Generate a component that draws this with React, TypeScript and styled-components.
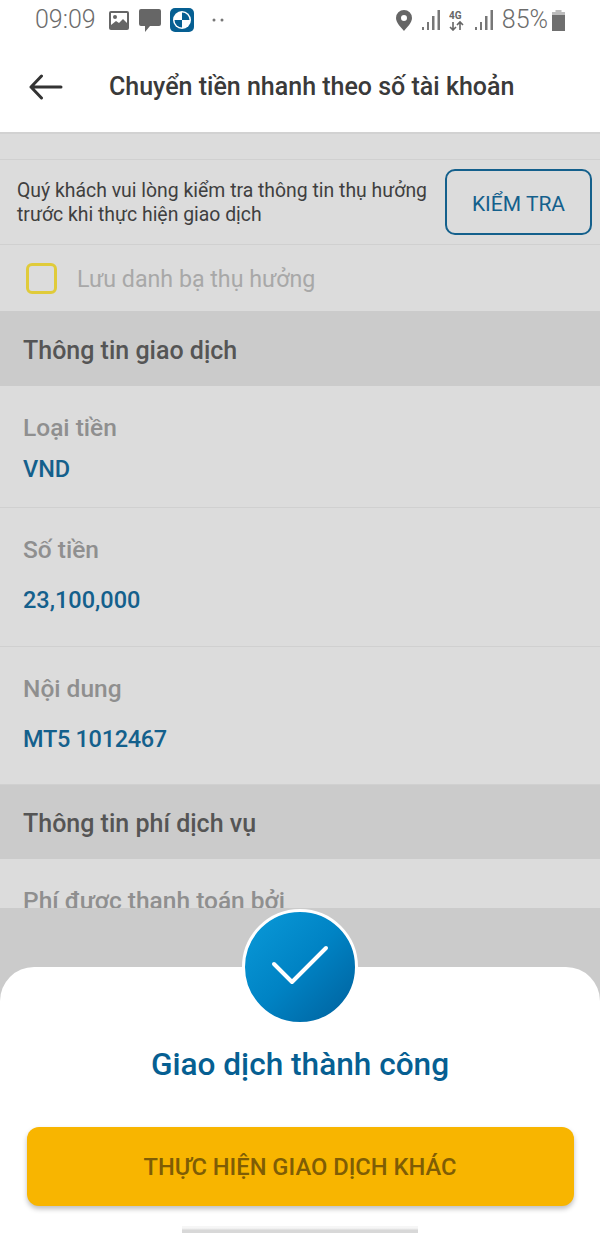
import React from 'react';
import styled, { createGlobalStyle } from 'styled-components';

const GlobalStyle = createGlobalStyle`
  html, body {
    margin: 0;
    padding: 0;
    background: #cbcbcb;
  }
  * {
    box-sizing: border-box;
  }
`

const Page = styled.div`
  position: relative;
  width: 600px;
  height: 1233px;
  overflow: hidden;
  display: flex;
  flex-direction: column;
  background: #cbcbcb;
  font-family: Roboto, "Noto Sans", sans-serif;
`

const StatusBar = styled.div`
  height: 44px;
  flex: none;
  background: #fff;
  display: flex;
  align-items: center;
  justify-content: space-between;
  padding: 0 35px 4px 35px;
  color: #6f6f6f;
`

const StatusGroup = styled.div`
  display: flex;
  align-items: center;
`

const StatusText = styled.span<{ $left?: number }>`
  font-size: 25px;
  font-weight: 300;
  line-height: 30px;
  color: #6c6c6c;
  margin-left: ${(p) => p.$left ?? 0}px;
`

const StatusIcon = styled.svg<{ $left?: number }>`
  display: block;
  flex: none;
  margin-left: ${(p) => p.$left ?? 0}px;
`

const Header = styled.header`
  height: 90px;
  flex: none;
  background: #fff;
  display: flex;
  align-items: center;
  padding: 0 0 2px 29px;
  border-bottom: 2px solid #d2d2d2;
`

const Title = styled.h1`
  margin: 0 0 0 46px;
  font-size: 25px;
  line-height: 30px;
  font-weight: 500;
  color: #3a3a3a;
`

const Content = styled.div`
  height: 774px;
  flex: none;
  overflow: hidden;
  background: #dcdcdc;
`

const Spacer = styled.div`
  height: 26px;
  border-bottom: 1px solid #d0d0d0;
`

const Notice = styled.div`
  height: 85px;
  display: flex;
  align-items: center;
  justify-content: space-between;
  padding: 0 8px 0 17px;
  border-bottom: 1px solid #d0d0d0;
`

const NoticeText = styled.p`
  margin: 2px 0 0;
  font-size: 19.4px;
  line-height: 24px;
  color: #3f3f3f;
`

const CheckButton = styled.button`
  width: 147px;
  height: 66px;
  background: transparent;
  border: 2px solid #14608c;
  border-radius: 10px;
  color: #14608c;
  font-family: inherit;
  font-size: 21px;
  padding: 3px 0 0;
`

const SaveRow = styled.label`
  height: 66px;
  display: flex;
  align-items: center;
  padding-left: 26px;
`

const CheckBox = styled.span`
  width: 31px;
  height: 31px;
  border: 3px solid #e0cb3a;
  border-radius: 6px;
`

const SaveLabel = styled.span`
  margin: 2px 0 0 20px;
  font-size: 23.2px;
  color: #a8a8a8;
`

const SectionTitle = styled.div<{ $height: number }>`
  height: ${(p) => p.$height}px;
  display: flex;
  align-items: center;
  padding: 3px 0 0 23px;
  background: #cbcbcb;
  color: #555;
  font-size: 25px;
  font-weight: 500;
`

const Field = styled.div<{ $height: number; $gap: number }>`
  height: ${(p) => p.$height}px;
  padding: 27px 23px 0;
  border-bottom: 1px solid #d0d0d0;
  display: flex;
  flex-direction: column;
  gap: ${(p) => p.$gap}px;
`

const FieldLabel = styled.div`
  font-size: 24.5px;
  line-height: 30px;
  font-weight: 500;
  color: #8f8f8f;
`

const FieldValue = styled.div<{ $tracking?: number }>`
  font-size: 23.5px;
  line-height: 30px;
  font-weight: 500;
  letter-spacing: ${(p) => p.$tracking ?? 0}px;
  color: #14608c;
`

const Sheet = styled.div`
  position: absolute;
  left: 0;
  right: 0;
  bottom: 0;
  height: 266px;
  background: #fff;
  border-radius: 34px 34px 0 0;
  display: flex;
  flex-direction: column;
  align-items: center;
`

const SuccessBadge = styled.div`
  position: absolute;
  left: 242px;
  top: -58px;
  width: 116px;
  height: 116px;
  border-radius: 50%;
  border: 3px solid #fff;
  background: linear-gradient(135deg, #0a9ad9 0%, #0083c4 50%, #00609c 100%);
  display: flex;
  align-items: center;
  justify-content: center;
`

const SheetTitle = styled.h2`
  margin: 78px 0 0;
  font-size: 31.6px;
  line-height: 40px;
  font-weight: 500;
  color: #065f92;
`

const PrimaryButton = styled.button`
  margin-top: 42px;
  width: 547px;
  height: 79px;
  flex: none;
  border: 0;
  border-radius: 12px;
  background: #f8b500;
  color: #7f5d05;
  font-family: inherit;
  font-size: 23.7px;
  font-weight: 500;
  box-shadow: 0 3px 5px rgba(0, 0, 0, 0.25);
`

const HomeBar = styled.div`
  margin-top: 20px;
  width: 236px;
  height: 7px;
  background: linear-gradient(#f6f6f6 0%, #f6f6f6 30%, #d8d8d8 60%, #d8d8d8 100%);
`

const Bars = ({ left }: { left: number }) => (
  <StatusIcon $left={left} width="18" height="22" viewBox="0 0 18 22">
    <rect x="0" y="18" width="2" height="3" fill="#777" />
    <rect x="5" y="13" width="2" height="8" fill="#777" />
    <rect x="10" y="7" width="2.500" height="14" fill="#777" />
    <rect x="15.500" y="1" width="2.500" height="20" fill="#777" />
  </StatusIcon>
)

export default function App() {
  return (
    <Page>
      <GlobalStyle />
      <StatusBar>
        <StatusGroup>
          <StatusText>09:09</StatusText>
          <StatusIcon $left={13} width="20" height="19" viewBox="0 0 20 19">
            <rect width="20" height="19" rx="2" fill="#666" />
            <rect x="2" y="2" width="16" height="15" fill="#fff" />
            <circle cx="6" cy="6" r="2" fill="#666" />
            <path d="M2 14 L7 10 L10 12 L14 8 L18 12 V17 H2 Z" fill="#666" />
          </StatusIcon>
          <StatusIcon $left={10} width="22" height="23" viewBox="0 0 22 23">
            <path d="M2 0 H20 A2 2 0 0 1 22 2 V15 A2 2 0 0 1 20 17 H11 L6 23 V17 H2 A2 2 0 0 1 0 15 V2 A2 2 0 0 1 2 0 Z" fill="#666" />
          </StatusIcon>
          <StatusIcon $left={9} width="24" height="24" viewBox="0 0 24 24">
            <rect width="24" height="24" rx="5" fill="#065f92" />
            <circle cx="12" cy="12" r="9" fill="#fff" />
            <path d="M12 4.5 A7.5 7.5 0 0 1 19.5 12 H12 Z" fill="#065f92" />
            <path d="M12 19.5 A7.5 7.5 0 0 1 4.5 12 H12 Z" fill="#065f92" />
          </StatusIcon>
          <StatusIcon $left={18} width="12" height="4" viewBox="0 0 12 4">
            <circle cx="2" cy="2" r="1.5" fill="#777" />
            <circle cx="10" cy="2" r="1.5" fill="#777" />
          </StatusIcon>
        </StatusGroup>
        <StatusGroup>
          <StatusIcon width="16" height="21" viewBox="0 0 16 21">
            <path fillRule="evenodd" d="M8 0 A8 8 0 0 1 16 8 C16 13 11 17 8 21 C5 17 0 13 0 8 A8 8 0 0 1 8 0 Z M8 5 A3 3 0 1 0 8 11 A3 3 0 1 0 8 5 Z" fill="#666" />
          </StatusIcon>
          <Bars left={10} />
          <StatusIcon $left={9} width="15" height="22" viewBox="0 0 15 22">
            <path d="M4 13 V21 M1 18 L4 21 L7 18 M11 21 V13 M8 16 L11 13 L14 16" fill="none" stroke="#666" strokeWidth="1.6" />
            <text x="0" y="10" fontSize="10" fontWeight="700" fontFamily="Roboto, sans-serif" fill="#666">4G</text>
          </StatusIcon>
          <Bars left={11} />
          <StatusText $left={9}>85%</StatusText>
          <StatusIcon $left={4} width="13" height="21" viewBox="0 0 13 21">
            <rect x="3.5" y="0" width="6" height="3" fill="#bdbdbd" />
            <rect x="0" y="2" width="13" height="3" fill="#bdbdbd" />
            <rect x="0" y="5" width="13" height="16" fill="#6f6f6f" />
          </StatusIcon>
        </StatusGroup>
      </StatusBar>

      <Header>
        <svg width="34" height="26" viewBox="0 0 34 26" fill="none" stroke="#333" strokeWidth="3" strokeLinecap="round" strokeLinejoin="round">
          <path d="M32 13 H2 M12.500 2 L2 13 L12.500 24" />
        </svg>
        <Title>Chuyển tiền nhanh theo số tài khoản</Title>
      </Header>

      <Content>
        <Spacer />
        <Notice>
          <NoticeText>
            Quý khách vui lòng kiểm tra thông tin thụ hưởng
            <br />
            trước khi thực hiện giao dịch
          </NoticeText>
          <CheckButton>KIỂM TRA</CheckButton>
        </Notice>
        <SaveRow>
          <CheckBox />
          <SaveLabel>Lưu danh bạ thụ hưởng</SaveLabel>
        </SaveRow>
        <SectionTitle $height={75}>Thông tin giao dịch</SectionTitle>
        <Field $height={122} $gap={11}>
          <FieldLabel>Loại tiền</FieldLabel>
          <FieldValue>VND</FieldValue>
        </Field>
        <Field $height={139} $gap={20}>
          <FieldLabel>Số tiền</FieldLabel>
          <FieldValue>23,100,000</FieldValue>
        </Field>
        <Field $height={138} $gap={20}>
          <FieldLabel>Nội dung</FieldLabel>
          <FieldValue $tracking={-0.3}>MT5 1012467</FieldValue>
        </Field>
        <SectionTitle $height={74}>Thông tin phí dịch vụ</SectionTitle>
        <Field $height={122} $gap={11}>
          <FieldLabel>Phí được thanh toán bởi</FieldLabel>
        </Field>
      </Content>

      <Sheet>
        <SuccessBadge>
          <svg width="60" height="50" viewBox="0 0 60 50" fill="none" stroke="#fff" strokeWidth="4" strokeLinecap="round" strokeLinejoin="round">
            <path d="M4 22 L22 40 L56 6" />
          </svg>
        </SuccessBadge>
        <SheetTitle>Giao dịch thành công</SheetTitle>
        <PrimaryButton>THỰC HIỆN GIAO DỊCH KHÁC</PrimaryButton>
        <HomeBar />
      </Sheet>
    </Page>
  )
}
